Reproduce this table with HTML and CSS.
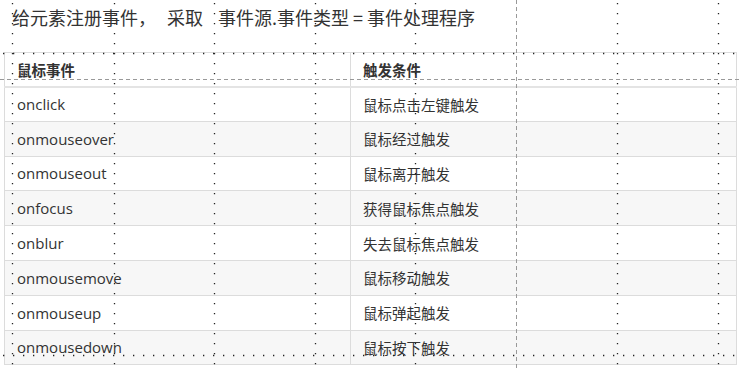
FILE: index.html
```html
<!DOCTYPE html>
<html lang="zh-CN">
<head>
<meta charset="utf-8">
<link rel="stylesheet" href="styles.css">
</head>
<body>
<div class="page">
  <p class="title">给元素注册事件，<span class="gap1"></span>采取<span class="gap2"></span>事件源.事件类型 = 事件处理程序</p>
  <table class="events">
    <thead>
      <tr><th class="c1">鼠标事件</th><th>触发条件</th></tr>
    </thead>
    <tbody>
      <tr><td class="c1">onclick</td><td>鼠标点击左键触发</td></tr>
      <tr class="alt"><td class="c1">onmouseover</td><td>鼠标经过触发</td></tr>
      <tr><td class="c1">onmouseout</td><td>鼠标离开触发</td></tr>
      <tr class="alt"><td class="c1">onfocus</td><td>获得鼠标焦点触发</td></tr>
      <tr><td class="c1">onblur</td><td>失去鼠标焦点触发</td></tr>
      <tr class="alt"><td class="c1">onmousemove</td><td>鼠标移动触发</td></tr>
      <tr><td class="c1">onmouseup</td><td>鼠标弹起触发</td></tr>
      <tr class="alt"><td class="c1">onmousedown</td><td>鼠标按下触发</td></tr>
    </tbody>
  </table>
  <svg class="guides" width="740" height="370" viewBox="0 0 740 370" aria-hidden="true">
    <g class="dots">
      <line x1="12.5" y1="3" x2="12.5" y2="370"/>
      <line x1="114.5" y1="3" x2="114.5" y2="370"/>
      <line x1="214.5" y1="3" x2="214.5" y2="370"/>
      <line x1="315.5" y1="3" x2="315.5" y2="370"/>
      <line x1="415.5" y1="3" x2="415.5" y2="370"/>
      <line x1="617.5" y1="3" x2="617.5" y2="370"/>
      <line x1="718.5" y1="3" x2="718.5" y2="370"/>
      <line x1="3" y1="53.5" x2="740" y2="53.5"/>
      <line x1="3" y1="355.5" x2="740" y2="355.5"/>
    </g>
    <g class="dashes">
      <line x1="516.5" y1="0" x2="516.5" y2="370"/>
      <line x1="0" y1="79.5" x2="740" y2="79.5"/>
    </g>
  </svg>
</div>
</body>
</html>
```
FILE: styles.css
```css
html, body {
  margin: 0;
  padding: 0;
  background: #fff;
}

.page {
  position: relative;
  width: 740px;
  height: 370px;
  overflow: hidden;
}

.title {
  margin: 0;
  padding: 5px 0 0 12px;
  height: 47px;
  box-sizing: border-box;
  font-family: "Noto Sans CJK SC", "Liberation Sans", sans-serif;
  font-size: 18px;
  line-height: 24px;
  color: #333;
  white-space: nowrap;
}

.gap1 {
  display: inline-block;
  width: 11px;
}

.gap2 {
  display: inline-block;
  width: 15px;
}

.events {
  margin: 5px 0 0 4px;
  width: 733px;
  border-collapse: collapse;
  font-family: "Open Sans", "Noto Sans CJK SC", sans-serif;
  font-size: 15px;
  color: #333;
  border: 1px solid #dcdcdc;
}

.events th,
.events td {
  height: 34.8px;
  padding: 0 12px;
  text-align: left;
  vertical-align: middle;
  border-top: 1px solid #dcdcdc;
  box-sizing: border-box;
}

.events th {
  height: 34px;
  font-family: "Noto Sans CJK SC", sans-serif;
  font-weight: bold;
  font-size: 14.5px;
  color: #333;
  border-bottom: 2px solid #e4e4e4;
}

.events td {
  font-size: 15px;
}

.events .c1 {
  width: 346px;
  border-right: 1px solid #dcdcdc;
}

.events td:not(.c1) {
  font-family: "Noto Sans CJK SC", sans-serif;
  font-size: 14.5px;
}

.events .alt {
  background: #f7f7f7;
}

.guides {
  position: absolute;
  left: 0;
  top: 0;
  pointer-events: none;
}

.dots line {
  stroke: #222;
  stroke-width: 1.3;
  stroke-dasharray: 1.3 8.7;
}

.dashes line {
  stroke: #999;
  stroke-width: 1;
  stroke-dasharray: 4 3;
}
```
